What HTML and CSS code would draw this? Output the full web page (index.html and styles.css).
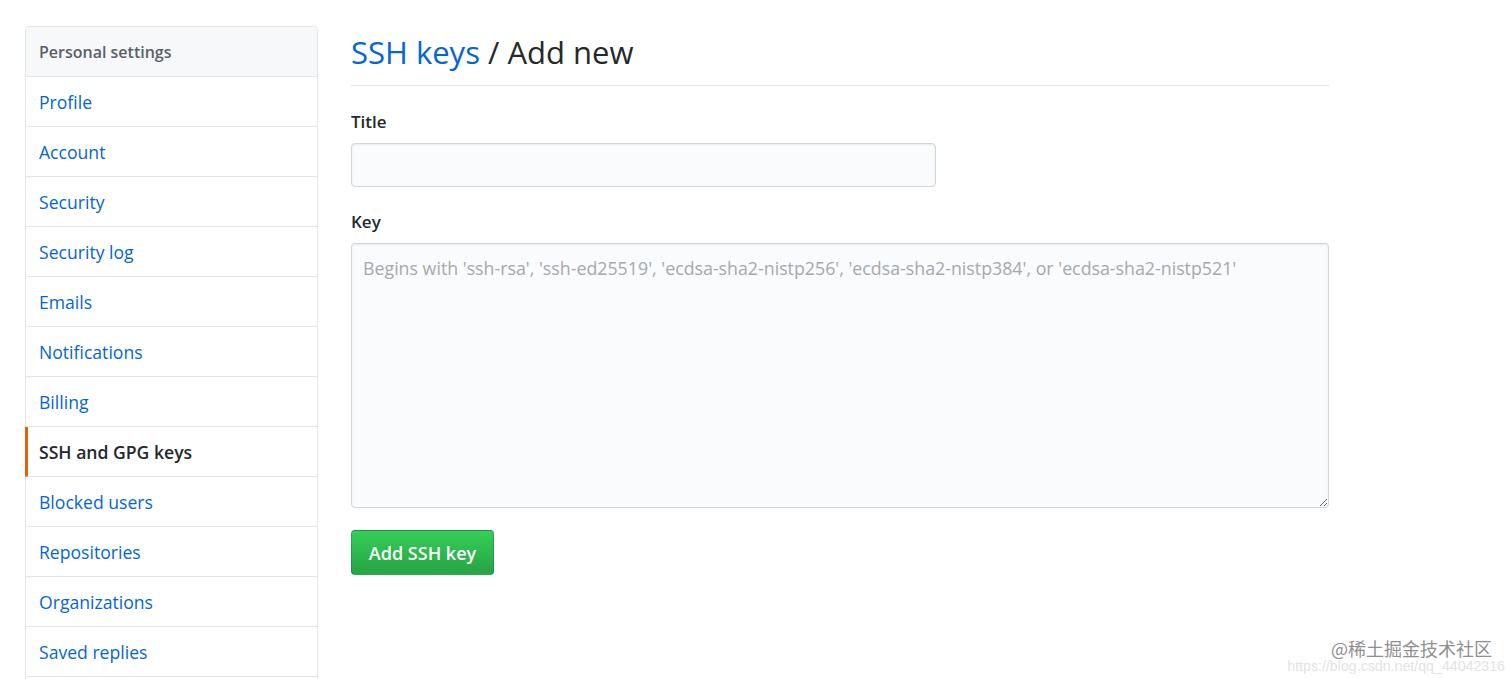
FILE: index.html
```html
<!DOCTYPE html>
<html lang="en">
<head>
<meta charset="utf-8">
<title>SSH keys / Add new</title>
<link rel="stylesheet" href="styles.css">
</head>
<body>
<div class="page">
  <nav class="menu">
    <div class="menu-heading">Personal settings</div>
    <a class="menu-item" href="#">Profile</a>
    <a class="menu-item" href="#">Account</a>
    <a class="menu-item" href="#">Security</a>
    <a class="menu-item" href="#">Security log</a>
    <a class="menu-item" href="#">Emails</a>
    <a class="menu-item" href="#">Notifications</a>
    <a class="menu-item" href="#">Billing</a>
    <a class="menu-item selected" href="#">SSH and GPG keys</a>
    <a class="menu-item" href="#">Blocked users</a>
    <a class="menu-item" href="#">Repositories</a>
    <a class="menu-item" href="#">Organizations</a>
    <a class="menu-item" href="#">Saved replies</a>
    <div class="menu-item menu-more"></div>
  </nav>
  <main class="main">
    <div class="subhead">
      <h2 class="subhead-heading"><a href="#">SSH keys</a> / Add new</h2>
    </div>
    <form class="form">
      <label class="label" for="title">Title</label>
      <input class="input" id="title" type="text">
      <label class="label key-label" for="key">Key</label>
      <textarea class="textarea" id="key" placeholder="Begins with 'ssh-rsa', 'ssh-ed25519', 'ecdsa-sha2-nistp256', 'ecdsa-sha2-nistp384', or 'ecdsa-sha2-nistp521'"></textarea>
      <button class="btn" type="button">Add SSH key</button>
    </form>
  </main>
</div>
<div class="watermark">
  <div class="wm-main">@稀土掘金技术社区</div>
  <div class="wm-url">https://blog.csdn.net/qq_44042316</div>
</div>
</body>
</html>
```

FILE: styles.css
```css
* { box-sizing: border-box; }
html, body { margin: 0; padding: 0; background: #fff; }
body {
  font-family: "Open Sans", "Noto Sans", "Noto Sans CJK SC", sans-serif;
  color: #24292e;
  height: 679px;
  overflow: hidden;
  position: relative;
}
.page {
  display: flex;
  align-items: flex-start;
  padding: 26px 0 0 25px;
  gap: 33px;
}
.menu {
  width: 293px;
  flex: none;
  border: 1px solid #e1e4e8;
  border-radius: 4px;
  display: flex;
  flex-direction: column;
}
.menu-heading {
  height: 50px;
  display: flex;
  align-items: center;
  padding-left: 13px;
  background: #f6f8fa;
  border-bottom: 1px solid #e1e4e8;
  border-radius: 4px 4px 0 0;
  font-size: 16px;
  font-weight: 600;
  color: #586069;
}
.menu-item {
  height: 50px;
  display: flex;
  align-items: center;
  padding-left: 13px;
  border-bottom: 1px solid #e1e4e8;
  font-size: 17.6px;
  color: #0366d6;
  text-decoration: none;
}
.menu-item.selected {
  color: #24292e;
  font-weight: 600;
  font-size: 17.6px;
  border-left: 3px solid #e36209;
  padding-left: 11px;
  margin-left: -1px;
}
.menu-more { height: 40px; border-bottom: none; }
.main {
  width: 978px;
  flex: none;
}
.subhead {
  border-bottom: 1px solid #e1e4e8;
  padding: 4px 0 10px;
}
.subhead-heading {
  margin: 0;
  font-size: 31px;
  font-weight: 400;
  line-height: 45px;
  color: #24292e;
}
.subhead-heading a {
  color: #0366d6;
  text-decoration: none;
}
.form {
  display: flex;
  flex-direction: column;
  align-items: flex-start;
  padding-top: 22px;
}
.label {
  font-size: 17px;
  font-weight: 600;
  line-height: 28px;
  margin-bottom: 7px;
}
.key-label { margin-top: 21px; }
.input {
  width: 585px;
  height: 44px;
  background: #fafbfc;
  border: 1px solid #d1d5da;
  border-radius: 4px;
  box-shadow: inset 0 1px 2px rgba(27,31,35,0.075);
  font: inherit;
  font-size: 17px;
  padding: 8px 11px;
}
.textarea {
  width: 978px;
  height: 265px;
  background: #fafbfc;
  border: 1px solid #d1d5da;
  border-radius: 4px;
  box-shadow: inset 0 1px 2px rgba(27,31,35,0.075);
  font-family: inherit;
  font-size: 17.8px;
  line-height: 26px;
  padding: 11px 11px;
  resize: vertical;
  margin: 0;
}
.textarea::placeholder { color: #a4a9ae; }
.btn {
  margin-top: 22px;
  width: 143px;
  height: 45px;
  border: 1px solid rgba(27,31,35,0.2);
  border-radius: 4px;
  background: linear-gradient(-180deg, #34d058 0%, #28a745 90%);
  color: #fff;
  font-family: inherit;
  font-size: 18px;
  font-weight: 600;
  padding: 0;
}
.watermark {
  position: absolute;
  right: 7px;
  bottom: 5px;
  text-align: right;
}
.wm-main {
  font-family: "Noto Sans CJK SC", "Noto Sans", sans-serif;
  font-size: 18px;
  color: #8f8f8f;
  line-height: 20px;
  margin-right: 13px;
}
.wm-url {
  font-family: "Liberation Sans", sans-serif;
  font-size: 14.2px;
  color: #e3e3e3;
  line-height: 16px;
}
```
